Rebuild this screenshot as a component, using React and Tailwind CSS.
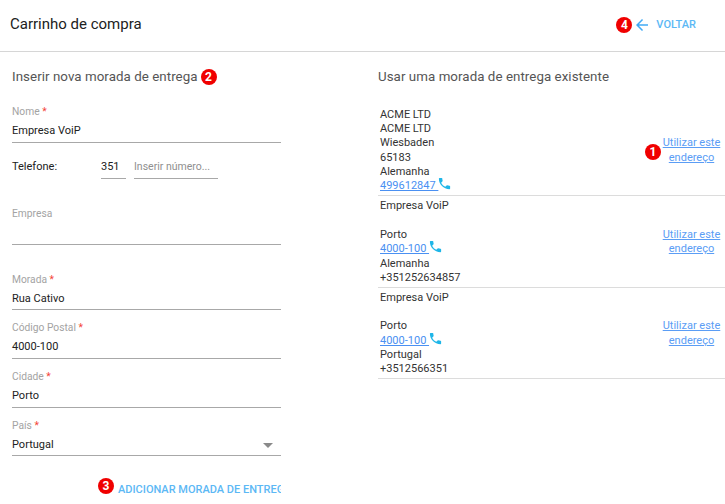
const ROBOTO = { fontFamily: "Roboto, sans-serif" };

function Badge({ n }) {
  return (
    <span className="grid place-items-center h-4 w-4 shrink-0 rounded-full bg-[#f00000] text-white text-[12px] leading-none font-bold">
      {n}
    </span>
  );
}

function Field({ label, value, select, className = "" }) {
  return (
    <div className={`h-[48.67px] w-[269px] ${className}`}>
      <div className="h-[25px] pt-[11px] text-[10.25px] leading-[14px] text-[#a3a3a3]">
        {label} <span className="text-[#f44336]">*</span>
      </div>
      <div className="relative h-[23.67px] border-b border-[#a8a8a8] pt-[5px] text-[11px] leading-[14px] text-[#212121]">
        {value}
        {select && (
          <span className="absolute right-[8px] top-[10px] h-0 w-0 border-x-[5px] border-t-[5px] border-x-transparent border-t-[#8a8a8a]" />
        )}
      </div>
    </div>
  );
}

function PhoneIcon() {
  return (
    <svg viewBox="0 0 24 24" className="-my-[4px] -ml-[1px] inline-block h-[15px] w-[15px] align-[2px] text-[#1fb6e8]" fill="currentColor">
      <path d="M6.62 10.79c1.44 2.83 3.76 5.14 6.59 6.59l2.2-2.2c.27-.27.67-.36 1.02-.24 1.12.37 2.33.57 3.57.57.55 0 1 .45 1 1V20c0 .55-.45 1-1 1-9.39 0-17-7.61-17-17 0-.55.45-1 1-1h3.5c.55 0 1 .45 1 1 0 1.25.2 2.45.57 3.57.11.35.03.74-.25 1.02l-2.2 2.2z" />
    </svg>
  );
}

function AddressRow({ lines, badge, className = "" }) {
  return (
    <div className={`flex items-center border-b border-[#dcdcdc] pl-[2px] text-[11px] leading-[14.33px] text-[#333] ${className}`}>
      <div className="flex-1">
        {lines.map((line, i) =>
          typeof line === "object" ? (
            <div key={i} className="h-[14.33px]">
              <a className="text-[#4a90f2] underline whitespace-pre">{line.phone + " "}</a>
              <PhoneIcon />
            </div>
          ) : (
            <div key={i} className="h-[14.33px]">{line}</div>
          )
        )}
      </div>
      <div className="relative mr-[4px] w-[59px] text-center text-[#5b9df5] underline">
        {badge && (
          <span className="absolute left-[-17px] top-[8px]">
            <Badge n={badge} />
          </span>
        )}
        Utilizar este endereço
      </div>
    </div>
  );
}

export default function App() {
  return (
    <div className="h-[504px] w-[725px] overflow-hidden bg-white" style={ROBOTO}>
      <header className="flex h-[52px] items-center border-b border-[#d6d6d6] pb-[2px] pl-[10px] pr-[29px]">
        <h1 className="text-[15px] font-normal text-[#212121]">Carrinho de compra</h1>
        <div className="ml-auto flex items-center">
          <Badge n="4" />
          <svg viewBox="0 0 24 24" className="ml-[1px] h-[18px] w-[18px] text-[#42aaf5]" fill="currentColor">
            <path d="M20 11H7.83l5.59-5.59L12 4l-8 8 8 8 1.41-1.41L7.83 13H20v-2z" />
          </svg>
          <span className="ml-[5px] mt-[1px] text-[11px] font-medium text-[#5cb8f5]">VOLTAR</span>
        </div>
      </header>

      <div className="flex">
        <section className="w-[378px] pl-[12px]">
          <div className="mt-[13px] flex h-[24px] items-center gap-[3px] text-[13.33px] tracking-[0.05px] text-[#555]">
            Inserir nova morada de entrega <Badge n="2" />
          </div>
          <Field label="Nome" value="Empresa VoiP" className="mt-[5px]" />
          <div className="flex h-[36px] w-[269px] items-end text-[11px] text-[#212121]">
            <span className="w-[89px] pb-[3px]">Telefone:</span>
            <span className="h-[24px] w-[25px] border-b border-[#a8a8a8] pt-[4px]">351</span>
            <span className="ml-[8px] h-[24px] w-[84px] whitespace-nowrap border-b border-[#a8a8a8] pt-[4px] text-[10.5px] text-[#8f8f8f]">Inserir número...</span>
          </div>
          <div className="h-[66px] w-[269px] border-b border-[#a8a8a8] pt-[28px] text-[10.25px] leading-[14px] text-[#a3a3a3]">Empresa</div>
          <Field label="Morada" value="Rua Cativo" className="mt-[17px]" />
          <Field label="Código Postal" value="4000-100" />
          <Field label="Cidade" value="Porto" />
          <Field label="País" value="Portugal" select />
          <div className="mt-[22px] flex w-[269px] items-start overflow-hidden pl-[86px]">
            <Badge n="3" />
            <span className="ml-[4px] mt-[5px] whitespace-nowrap text-[11px] leading-[14px] font-medium text-[#5cb8f5]">ADICIONAR MORADA DE ENTREGA</span>
          </div>
        </section>

        <section className="flex-1">
          <div className="mt-[13px] flex h-[24px] items-center text-[13.33px] tracking-[0.05px] text-[#555]">
            Usar uma morada de entrega existente
          </div>
          <div className="mt-[18px]">
            <AddressRow
              badge="1"
              className="h-[89px] pb-[1px]"
              lines={["ACME LTD", "ACME LTD", "Wiesbaden", "65183", "Alemanha", { phone: "499612847" }]}
            />
            <AddressRow
              className="h-[91.5px] pt-[2px]"
              lines={["Empresa VoiP", "\u00a0", "Porto", { phone: "4000-100" }, "Alemanha", "+351252634857"]}
            />
            <AddressRow
              className="h-[91.5px] pt-[2px]"
              lines={["Empresa VoiP", "\u00a0", "Porto", { phone: "4000-100" }, "Portugal", "+3512566351"]}
            />
          </div>
        </section>
      </div>
    </div>
  );
}
